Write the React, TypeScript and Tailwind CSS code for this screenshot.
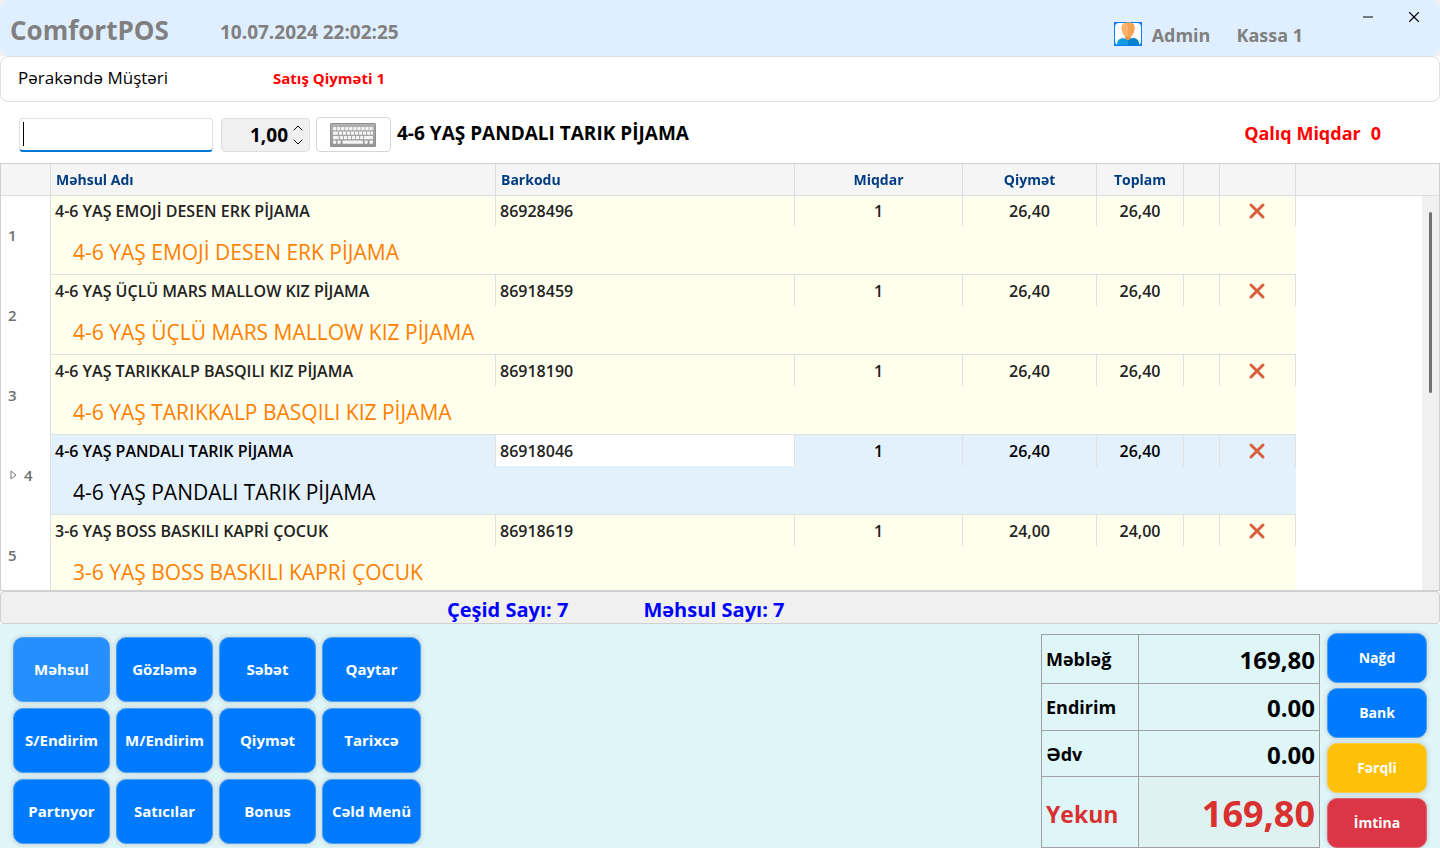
import { useState } from 'react';
import { ChevronDown, ChevronUp, Minus, X } from 'lucide-react';

type Item = {
  name: string;
  barcode: string;
  qty: string;
  price: string;
  total: string;
};

const items: Item[] = [
  { name: '4-6 YAŞ EMOJİ DESEN ERK PİJAMA', barcode: '86928496', qty: '1', price: '26,40', total: '26,40' },
  { name: '4-6 YAŞ ÜÇLÜ MARS MALLOW KIZ PİJAMA', barcode: '86918459', qty: '1', price: '26,40', total: '26,40' },
  { name: '4-6 YAŞ TARIKKALP BASQILI KIZ PİJAMA', barcode: '86918190', qty: '1', price: '26,40', total: '26,40' },
  { name: '4-6 YAŞ PANDALI TARIK PİJAMA', barcode: '86918046', qty: '1', price: '26,40', total: '26,40' },
  { name: '3-6 YAŞ BOSS BASKILI KAPRİ ÇOCUK', barcode: '86918619', qty: '1', price: '24,00', total: '24,00' },
];

const actions = [
  'Məhsul', 'Gözləmə', 'Səbət', 'Qaytar',
  'S/Endirim', 'M/Endirim', 'Qiymət', 'Tarixcə',
  'Partnyor', 'Satıcılar', 'Bonus', 'Cəld Menü',
];

const payments = [
  { label: 'Nağd', color: 'bg-[#007bff] border-[#4a9ff0]' },
  { label: 'Bank', color: 'bg-[#007bff] border-[#4a9ff0]' },
  { label: 'Fərqli', color: 'bg-[#ffc107] border-[#f5cb4c]' },
  { label: 'İmtina', color: 'bg-[#dc3545] border-[#da6470]' },
];

function UserIcon() {
  return (
    <svg width="28" height="24" viewBox="0 0 28 24" aria-hidden="true">
      <rect width="28" height="24" fill="#0a7cf5" />
      <rect x="1" y="1" width="26" height="22" rx="4" fill="#fff" />
      <path d="M3 23c0-4.500 2-6.500 6-7l5 1.500 5-1.500c4 0.500 6 2.500 6 7z" fill="#0d9ae0" />
      <path d="M14 17.500l5-1.500c4 0.500 6 2.500 6 7H14z" fill="#0081cc" />
      <path d="M11 12h6v3.500c0 1.500-1.500 2.500-3 2.500s-3-1-3-2.500z" fill="#e9954a" />
      <path d="M14 0.500c-4.500 0-6.500 1.500-6.500 5.500C7.500 11 10 15 14 15s6.500-4 6.500-9c0-4-2-5.500-6.500-5.500z" fill="#fab368" />
      <path d="M14 0.500c4.500 0 6.500 1.500 6.500 5.500 0 5-2.500 9-6.500 9z" fill="#f4a354" />
    </svg>
  );
}

function KeyboardIcon() {
  return (
    <svg width="46" height="24" viewBox="0 0 46 24" aria-hidden="true">
      <defs>
        <linearGradient id="kb" x1="0" y1="0" x2="0" y2="1">
          <stop offset="0" stopColor="#b2b2b2" />
          <stop offset="1" stopColor="#959595" />
        </linearGradient>
      </defs>
      <rect width="46" height="24" rx="1.500" fill="#8f8f8f" />
      <rect x="1" y="1" width="44" height="22" rx="1" fill="url(#kb)" />
      <g fill="#f4f4f4">
        {[0, 1, 2, 3, 4, 5, 6, 7, 8, 9].map((k) => (
          <rect key={k} x={3 + k * 4.050} y="4" width="3.200" height="3.200" rx="0.400" />
        ))}
        <rect x="3" y="8.500" width="4.800" height="3.200" rx="0.400" />
        {[0, 1, 2, 3, 4, 5, 6, 7].map((k) => (
          <rect key={k} x={8.800 + k * 4.050} y="8.500" width="3.200" height="3.200" rx="0.400" />
        ))}
        <rect x="41" y="8.500" width="2" height="3.200" rx="0.400" />
        <rect x="3" y="13" width="5.800" height="3.200" rx="0.400" />
        {[0, 1, 2, 3, 4, 5].map((k) => (
          <rect key={k} x={9.800 + k * 4.050} y="13" width="3.200" height="3.200" rx="0.400" />
        ))}
        <rect x="34" y="13" width="9" height="3.200" rx="0.400" />
        <rect x="3" y="17.500" width="3.200" height="3.200" rx="0.400" />
        <rect x="7.500" y="17.500" width="3.200" height="3.200" rx="0.400" />
        <rect x="12.500" y="17.500" width="20.500" height="3.200" rx="0.400" />
        <rect x="34.500" y="17.500" width="3.200" height="3.200" rx="0.400" />
        <rect x="39.500" y="17.500" width="3.500" height="3.200" rx="0.400" />
      </g>
    </svg>
  );
}

function ItemRows({ item, index, selected, onSelect }: {
  item: Item,
  index: number,
  selected: boolean,
  onSelect: () => void,
}) {
  const bg = selected ? 'bg-[#e3f1fd]' : 'bg-[#ffffee]';
  const cell = 'border-r border-[#e0e0e0] px-1';

  return (
    <tbody onClick={onSelect}>
      <tr className={`h-[31px] text-base leading-5 font-semibold ${selected ? 'text-black' : 'text-[#222]'}`}>
        <th rowSpan={2} scope="row" className="border-r border-[#e0e0e0] bg-white px-[7px] text-left text-[15px] font-semibold text-[#6f6f6f]">
          <span className="flex items-center gap-1">
            {selected && (
              <svg width="12" height="12" viewBox="0 0 12 12" fill="none" stroke="#777" aria-hidden="true">
                <path d="M3 2v8l5-4z" />
              </svg>
            )}
            {index + 1}
          </span>
        </th>
        <td className={`${cell} ${bg}`}>{item.name}</td>
        <td className={`${cell} ${selected ? 'bg-white text-[#222]' : bg}`}>{item.barcode}</td>
        <td className={`${cell} ${bg} text-center`}>{item.qty}</td>
        <td className={`${cell} ${bg} text-center`}>{item.price}</td>
        <td className={`${cell} ${bg} text-center`}>{item.total}</td>
        <td className={`${cell} ${bg}`} />
        <td className={`border-r border-[#e0e0e0] pr-0.5 ${bg}`}>
          <button aria-label="Sil" className="mx-auto block">
            <svg width="18" height="18" viewBox="0 0 18 18" stroke="#d9603f" strokeWidth="3" strokeLinecap="round" aria-hidden="true">
              <path d="M3 3l12 12M15 3L3 15" />
            </svg>
          </button>
        </td>
        <td rowSpan={2} className="bg-white" />
      </tr>
      <tr className="h-[49px]">
        <td colSpan={7} className={`border-b border-[#e0e0e0] pl-[22px] pt-1 text-[21px] leading-7 ${bg} ${selected ? 'text-black' : 'text-[#ff8000]'}`}>
          {item.name}
        </td>
      </tr>
    </tbody>
  );
}

export default function App() {
  const [selected, setSelected] = useState(3);
  const [code, setCode] = useState('');
  const [qty, setQty] = useState(1);

  const th = 'border-r border-[#dedede] px-[5px] font-bold';
  const label = 'border border-[#a0a0a0] px-1 text-left text-lg font-bold';
  const value = 'border border-[#a0a0a0] px-1 pt-0.5 text-right text-2xl font-bold';

  return (
    <div className="flex h-screen flex-col bg-white font-['Open_Sans','Noto_Sans',sans-serif] text-black">
      {/* Title bar */}
      <div className="bg-[#f0f0f0]">
        <header className="flex h-14 items-center rounded-lg bg-[#e0efff] pl-2.5 font-bold text-[#808080]">
          <h1 className="w-[210px] pt-1 text-[26px]">ComfortPOS</h1>
          <time className="pt-2 text-[19px]">10.07.2024 22:02:25</time>
          <div className="ml-auto flex items-center gap-2.5 pt-3 text-lg">
            <UserIcon />
            <span className="pt-0.5">Admin</span>
            <span className="ml-4 pt-0.5">Kassa 1</span>
          </div>
          <div className="ml-14 flex gap-7 self-start pr-[17px] pt-2 text-black">
            <button aria-label="Kiçilt" className="flex h-[18px] w-[18px] items-center justify-center">
              <Minus className="h-4 w-4" strokeWidth={1.5} />
            </button>
            <button aria-label="Bağla" className="flex h-[18px] w-[18px] items-center justify-center">
              <X className="h-[18px] w-[18px]" strokeWidth={1.5} />
            </button>
          </div>
        </header>
      </div>

      {/* Customer */}
      <div className="flex h-[46px] shrink-0 items-center rounded-lg border border-[#dedede] pb-0.5 pl-[17px]">
        <span className="w-[255px] text-[17px]">Pərakəndə Müştəri</span>
        <span className="text-[15px] font-bold text-[#ff0000]">Satış Qiyməti 1</span>
      </div>

      {/* Scan row */}
      <div className="flex h-[61px] shrink-0 items-center pl-[19px] pt-1">
        <div className="relative mr-2">
          <input
            aria-label="Barkod"
            value={code}
            onChange={(e) => setCode(e.target.value)}
            className="block h-[34px] w-[194px] rounded border border-b-2 border-[#dedede] border-b-[#0078d7] px-1 outline-none"
          />
          {code === '' && <span className="pointer-events-none absolute left-1 top-1 h-6 w-px bg-black" />}
        </div>
        <div className="mr-1.5 flex h-[34px] w-[89px] items-center rounded border border-[#dedede] bg-[#f0f0f0] pr-px">
          <input
            aria-label="Miqdar"
            value={qty.toFixed(2).replace('.', ',')}
            readOnly
            className="w-full min-w-0 bg-transparent pt-0.5 text-right text-[19px] font-bold outline-none"
          />
          <div className="flex flex-col">
            <button aria-label="Artır" onClick={() => setQty(qty + 1)} className="flex h-3.5 w-5 items-center justify-center">
              <ChevronUp className="h-4 w-4 shrink-0" strokeWidth={1.5} />
            </button>
            <button aria-label="Azalt" onClick={() => setQty(Math.max(1, qty - 1))} className="flex h-3.5 w-5 items-center justify-center">
              <ChevronDown className="h-4 w-4 shrink-0" strokeWidth={1.5} />
            </button>
          </div>
        </div>
        <button aria-label="Klaviatura" className="mr-1.5 flex h-[35px] w-[75px] items-center justify-center rounded border border-[#d6d6d6] bg-white pr-px">
          <KeyboardIcon />
        </button>
        <span className="pb-0.5 text-[19px] font-bold">{items[selected].name}</span>
        <span className="ml-auto mr-[59px] flex gap-2.5 pb-1 text-lg font-bold text-[#ff0000]">
          <span>Qalıq Miqdar</span>
          <span>0</span>
        </span>
      </div>

      {/* Items */}
      <div className="relative min-h-0 flex-1 overflow-hidden border border-[#d0d0d0]">
        <table className="w-full table-fixed border-separate border-spacing-0">
          <colgroup>
            <col className="w-[50px]" />
            <col className="w-[445px]" />
            <col className="w-[299px]" />
            <col className="w-[168px]" />
            <col className="w-[134px]" />
            <col className="w-[87px]" />
            <col className="w-[36px]" />
            <col className="w-[76px]" />
            <col />
          </colgroup>
          <thead className="sticky top-0 z-10 bg-[#f5f5f5] text-sm leading-5 text-[#003c80] shadow-[0_1px_0_#dedede]">
            <tr className="h-[31px]">
              <td className={th} />
              <th className={`${th} text-left`}>Məhsul Adı</th>
              <th className={`${th} text-left`}>Barkodu</th>
              <th className={th}>Miqdar</th>
              <th className={th}>Qiymət</th>
              <th className={th}>Toplam</th>
              <td className={th} />
              <td className={th} />
              <td />
            </tr>
          </thead>
          {items.map((item, i) => (
            <ItemRows key={item.barcode} item={item} index={i} selected={i === selected} onSelect={() => setSelected(i)} />
          ))}
        </table>
        <div className="absolute bottom-0 right-0 top-8 w-[17px] bg-[#f0f0f0] pt-4">
          <div className="mx-auto h-[181px] w-[3px] rounded-full bg-[#707070]" />
        </div>
      </div>

      {/* Counters */}
      <div className="flex h-[33px] shrink-0 items-center gap-[75px] rounded border border-[#d0d0d0] bg-[#f0f0f0] pl-[446px] pt-1 text-xl font-bold text-[#0000ff]">
        <span>Çeşid Sayı: 7</span>
        <span>Məhsul Sayı: 7</span>
      </div>

      {/* Actions and totals */}
      <div className="flex h-[224px] shrink-0 items-start justify-between bg-[#dff6f9] pl-[13px] pr-[13px]">
        <div className="mt-[13px] grid grid-cols-[97px_97px_97px_99px] gap-1.5">
          {actions.map((a, i) => (
            <button
              key={a}
              className={`h-[65px] whitespace-nowrap rounded-[10px] border border-[#4a9ff0] text-[15px] font-bold text-white shadow-[0_0_4px_1px_#c8d4d6] ${i === 0 ? 'bg-[#268fff]' : 'bg-[#007bff]'}`}
            >
              {a}
            </button>
          ))}
        </div>

        <div className="flex items-start gap-[7px]">
          <table className="mt-2.5 w-[279px] table-fixed border-collapse">
            <colgroup>
              <col className="w-[97px]" />
              <col />
            </colgroup>
            <tbody>
              <tr className="h-[49px]">
                <th scope="row" className={label}>Məbləğ</th>
                <td className={value}>169,80</td>
              </tr>
              <tr className="h-[47px]">
                <th scope="row" className={label}>Endirim</th>
                <td className={value}>0.00</td>
              </tr>
              <tr className="h-[46px]">
                <th scope="row" className={label}>Ədv</th>
                <td className={value}>0.00</td>
              </tr>
              <tr className="h-[71px] text-[#d93030]">
                <th scope="row" className="border border-[#a0a0a0] px-1 pt-1 text-left text-[23px] font-bold">Yekun</th>
                <td className="border border-[#a0a0a0] bg-[#e0f1f2] px-1 pt-1 text-right text-4xl font-bold">169,80</td>
              </tr>
            </tbody>
          </table>
          <div className="mt-[9px] flex flex-col gap-[5px]">
            {payments.map((p) => (
              <button
                key={p.label}
                className={`h-[50px] w-[100px] rounded-[10px] border text-sm font-bold text-white shadow-[0_0_4px_1px_#c8d4d6] ${p.color}`}
              >
                {p.label}
              </button>
            ))}
          </div>
        </div>
      </div>
    </div>
  );
}
